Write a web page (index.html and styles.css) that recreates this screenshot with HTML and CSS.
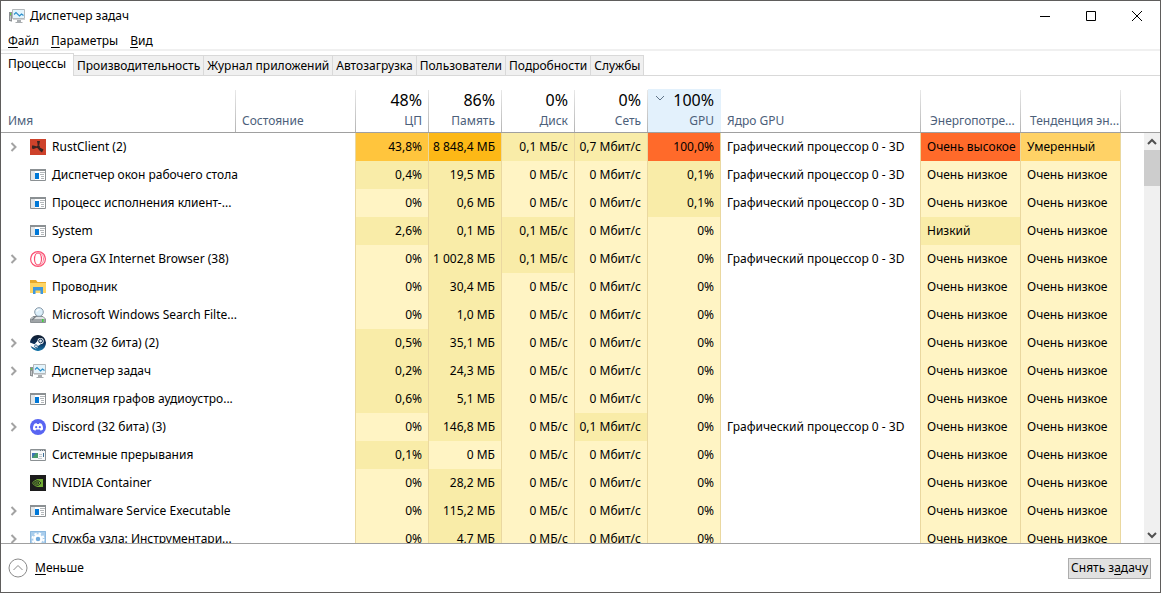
FILE: index.html
```
<!doctype html>
<html lang="ru">
  <head>
    <meta charset="utf-8">
    <title>Диспетчер задач</title>
    <link rel="stylesheet" href="styles.css">
  </head>
  <body>
    <!-- icons used in the rows -->
    <svg class="sprite" aria-hidden="true">
      <symbol id="i-arrow" viewBox="0 0 8 10"><path d="M1.5 1l4 4-4 4" fill="none" stroke="#a3a3a3" stroke-width="2"/></symbol>
      <symbol id="i-taskmgr" viewBox="0 0 16 16">
        <path d="M3.500 1.500h12v9h-12z" fill="#e3f4fc" stroke="#b4b8bb"/>
        <path d="M4 11.500h12" stroke="#d0d3d5"/>
        <path d="M8 12h4v2h1.500v1h-7v-1H8z" fill="#a9adb0"/>
        <path d="M0 4h3v9H0z" fill="#8d9194"/>
        <path d="M1 5h1v2H1z" fill="#5fd43c"/>
        <path d="M1 8h1v4H1zM2 13h1v1H1z" fill="#c3c6c8"/>
        <path d="M5 6.500l2-2 3.500 3.500 2-2 2 1.500" fill="none" stroke="#2b8fcb" stroke-width="1.200"/>
      </symbol>
      <symbol id="i-app" viewBox="0 0 16 16">
        <path d="M.5 2.500h15v11H.5z" fill="#fff" stroke="#8b9093"/>
        <path d="M0 2h16v2H0z" fill="#8b9093"/>
        <path d="M1 4h4v9H1z" fill="#e2e6e9"/>
        <path d="M5 6h4v6H5z" fill="#0078d7"/>
        <path d="M10 5.500h5M10 7.500h4M11 9.500h3M11 11.500h3" stroke="#b3b7ba"/>
      </symbol>
      <symbol id="i-interrupt" viewBox="0 0 16 16">
        <path d="M.5 2.500h15v11H.5z" fill="#f8f9fa" stroke="#8b9093"/>
        <path d="M1 3.500h14" stroke="#c6cbd0"/>
        <path d="M10 3.500h1M12 3.500h1M14 3.500h1" stroke="#6d7880"/>
        <path d="M2 6h6v5H2z" fill="#4a9b6b"/>
        <path d="M2 6h4L2 11z" fill="#3f72b5"/>
        <path d="M9 7.500h3M9 9.500h3M8 11.500h4" stroke="#c3c9ce"/>
        <path d="M13.500 6v4" stroke="#3c6e96"/>
      </symbol>
      <symbol id="i-rust" viewBox="0 0 16 16">
        <path d="M0 0h16v16H0z" fill="#ce422b"/>
        <path d="M7 2h3L9.200 6.500H7.800z" fill="#3a2421"/>
        <path d="M2 6.500h1.500L7 7.500v1.200L3.500 10 2 9.500z" fill="#3a2421"/>
        <path d="M9 8l4.500 2.500-1.500 3L10 12 7.800 9.500z" fill="#3a2421"/>
        <circle cx="8.300" cy="7.800" r="1.600" fill="#3a2421"/>
      </symbol>
      <symbol id="i-opera" viewBox="0 0 16 16">
        <circle cx="8" cy="8" r="7.400" fill="#fff" stroke="#fa4e71" stroke-width="1.200"/>
        <ellipse cx="8" cy="8" rx="3.500" ry="6" fill="none" stroke="#fa4e71" stroke-width="1.200"/>
        <path d="M6.500 2.500c5-2 7 2 7 5.500s-2.500 7.500-7 5.500" fill="none" stroke="#fb8aa0"/>
      </symbol>
      <symbol id="i-folder" viewBox="0 0 16 16">
        <path d="M0 1h6l1.500 2H16v11H0z" fill="#e8a92c"/>
        <path d="M0 4h16v10H0z" fill="#ffd563"/>
        <path d="M3 8h10v7h-2.500v-3.500h-5V15H3z" fill="#3f97dc"/>
      </symbol>
      <symbol id="i-search" viewBox="0 0 16 16">
        <path d="M3 9.500h10l2.500 2.500v3.500H.5V12z" fill="#dfe2e4" stroke="#8b9194"/>
        <path d="M1 12h14v3H1z" fill="#9fa4a7"/>
        <path d="M12 12h1.500v3H12z" fill="#3fd63b"/>
        <path d="M6 9l-4 4" stroke="#777d82" stroke-width="1.500"/>
        <circle cx="9" cy="5" r="4.300" fill="#dceffa" stroke="#8799a8"/>
        <path d="M6.500 4.500Q7.500 2.500 9.500 2.500" fill="none" stroke="#fff" stroke-width="1.200"/>
      </symbol>
      <symbol id="i-steam" viewBox="0 0 16 16">
        <linearGradient id="steam-bg" x1="0" y1="0" x2="0" y2="1"><stop offset="0" stop-color="#111d2e"/><stop offset=".5" stop-color="#0d2f58"/><stop offset="1" stop-color="#1779ad"/></linearGradient>
        <path d="M8 0a8 8 0 1 1-7.700 10.200A8 8 0 0 1 8 0z" fill="url(#steam-bg)"/>
        <path d="M0 7.500l4.500 1.800L7.500 6h2l1.500 3-3 2-.5 1.700-2 .8L0 10.800z" fill="#fff"/>
        <circle cx="10.600" cy="6" r="3.100" fill="#fff"/>
        <circle cx="10.600" cy="6" r="1.900" fill="#dfe7ee" stroke="#123458"/>
        <circle cx="6" cy="11.200" r="1.400" fill="#fff" stroke="#145184" stroke-width=".8"/>
      </symbol>
      <symbol id="i-discord" viewBox="0 0 16 16">
        <circle cx="8" cy="8" r="8" fill="#5865f2"/>
        <path d="M4.500 4.700L6.500 4l.5.900h2l.5-.900 2 .7c1.200 1.800 1.700 3.700 1.500 5.800l-2.300 1.200-.7-1.200H6l-.7 1.200L3 10.500c-.2-2.100.3-4 1.500-5.800z" fill="#fff"/>
        <circle cx="6.200" cy="8.200" r="1.100" fill="#5865f2"/>
        <circle cx="9.800" cy="8.200" r="1.100" fill="#5865f2"/>
      </symbol>
      <symbol id="i-nvidia" viewBox="0 0 16 16">
        <path d="M0 0h16v16H0z" fill="#1c1c1c"/>
        <path d="M6.500 4H13v8H6.500z" fill="#72ad35"/>
        <path d="M6.500 5.500q3 0 4.500 2.500-1.500 2.500-4.500 3" fill="none" stroke="#1c1c1c" stroke-width=".8"/>
        <path d="M6.500 5Q4 5.500 2.500 8q1.500 2.500 4 3.300M6.500 6.700Q5 7 4.500 8q.5 1.300 2 1.700" fill="none" stroke="#72ad35" stroke-width=".9"/>
        <path d="M6.500 7q2-.2 2.500 1-.7 1.500-2.500 1" fill="none" stroke="#1c1c1c" stroke-width=".8"/>
      </symbol>
      <symbol id="i-service" viewBox="0 0 16 16">
        <path d="M0 0h16v16H0z" fill="#a9cdec"/>
        <path d="M.5 .5h15v15H.5z" fill="none" stroke="#8db9df"/>
        <circle cx="8" cy="8" r="5.500" fill="none" stroke="#fff" stroke-width="2" stroke-dasharray="2.320 2"/>
        <circle cx="8" cy="8" r="3.500" fill="#6fa9dc" stroke="#fff" stroke-width="2.500"/>
      </symbol>
    </svg>

    <div class="window">
      <header class="title-bar">
        <svg class="icon"><use href="#i-taskmgr"/></svg>
        <h1>Диспетчер задач</h1>
        <div class="window-buttons">
          <button aria-label="Свернуть"><svg viewBox="0 0 12 12"><path d="M1 6.500h10"/></svg></button>
          <button aria-label="Развернуть"><svg viewBox="0 0 12 12"><path d="M1.500 1.500h9v9h-9z"/></svg></button>
          <button aria-label="Закрыть"><svg viewBox="0 0 12 12"><path d="M1 1l10 10M11 1L1 11"/></svg></button>
        </div>
      </header>

      <nav class="menu">
        <button><u>Ф</u>айл</button>
        <button><u>П</u>араметры</button>
        <button><u>В</u>ид</button>
      </nav>

      <div class="tabs" role="tablist">
        <button class="tab active" role="tab" aria-selected="true">Процессы</button>
        <button class="tab" role="tab">Производительность</button>
        <button class="tab" role="tab">Журнал приложений</button>
        <button class="tab" role="tab">Автозагрузка</button>
        <button class="tab" role="tab">Пользователи</button>
        <button class="tab" role="tab">Подробности</button>
        <button class="tab" role="tab">Службы</button>
      </div>

      <main class="content">
        <div class="table-wrap">
          <table>
            <colgroup>
              <col class="col-name"><col class="col-state">
              <col class="col-num"><col class="col-num"><col class="col-num"><col class="col-num"><col class="col-num">
              <col class="col-core"><col class="col-power"><col class="col-power"><col>
            </colgroup>
            <thead>
              <tr>
                <th>Имя</th>
                <th class="text">Состояние</th>
                <th class="num"><strong>48%</strong>ЦП</th>
                <th class="num"><strong>86%</strong>Память</th>
                <th class="num"><strong>0%</strong>Диск</th>
                <th class="num"><strong>0%</strong>Сеть</th>
                <th class="num sorted"><div><strong><svg viewBox="0 0 10 6"><path d="M1 1l4 4 4-4"/></svg>100%</strong>GPU</div></th>
                <th class="text">Ядро GPU</th>
                <th class="power">Энергопотре...</th>
                <th class="power">Тенденция эн...</th>
                <th class="rest"></th>
              </tr>
            </thead>
            <tbody>
              <tr>
                <td><div class="name"><svg class="arrow"><use href="#i-arrow"/></svg><svg class="icon"><use href="#i-rust"/></svg>RustClient (2)</div></td><td></td>
                <td class="heat-3">43,8%</td><td class="heat-4">8 848,4 МБ</td><td class="heat-1">0,1 МБ/с</td><td class="heat-1">0,7 Мбит/с</td><td class="heat-5">100,0%</td>
                <td>Графический процессор 0 - 3D</td><td class="heat-5">Очень высокое</td><td class="heat-2">Умеренный</td><td></td>
              </tr>
              <tr>
                <td><div class="name"><span class="arrow"></span><svg class="icon"><use href="#i-app"/></svg>Диспетчер окон рабочего стола</div></td><td></td>
                <td class="heat-1">0,4%</td><td class="heat-1">19,5 МБ</td><td class="heat-0">0 МБ/с</td><td class="heat-0">0 Мбит/с</td><td class="heat-1">0,1%</td>
                <td>Графический процессор 0 - 3D</td><td class="heat-0">Очень низкое</td><td class="heat-0">Очень низкое</td><td></td>
              </tr>
              <tr>
                <td><div class="name"><span class="arrow"></span><svg class="icon"><use href="#i-app"/></svg>Процесс исполнения клиент-...</div></td><td></td>
                <td class="heat-0">0%</td><td class="heat-1">0,6 МБ</td><td class="heat-0">0 МБ/с</td><td class="heat-0">0 Мбит/с</td><td class="heat-1">0,1%</td>
                <td>Графический процессор 0 - 3D</td><td class="heat-0">Очень низкое</td><td class="heat-0">Очень низкое</td><td></td>
              </tr>
              <tr>
                <td><div class="name"><span class="arrow"></span><svg class="icon"><use href="#i-app"/></svg>System</div></td><td></td>
                <td class="heat-1">2,6%</td><td class="heat-1">0,1 МБ</td><td class="heat-1">0,1 МБ/с</td><td class="heat-0">0 Мбит/с</td><td class="heat-0">0%</td>
                <td></td><td class="heat-1">Низкий</td><td class="heat-0">Очень низкое</td><td></td>
              </tr>
              <tr>
                <td><div class="name"><svg class="arrow"><use href="#i-arrow"/></svg><svg class="icon"><use href="#i-opera"/></svg>Opera GX Internet Browser (38)</div></td><td></td>
                <td class="heat-0">0%</td><td class="heat-1">1 002,8 МБ</td><td class="heat-1">0,1 МБ/с</td><td class="heat-0">0 Мбит/с</td><td class="heat-0">0%</td>
                <td>Графический процессор 0 - 3D</td><td class="heat-0">Очень низкое</td><td class="heat-0">Очень низкое</td><td></td>
              </tr>
              <tr>
                <td><div class="name"><span class="arrow"></span><svg class="icon"><use href="#i-folder"/></svg>Проводник</div></td><td></td>
                <td class="heat-0">0%</td><td class="heat-1">30,4 МБ</td><td class="heat-0">0 МБ/с</td><td class="heat-0">0 Мбит/с</td><td class="heat-0">0%</td>
                <td></td><td class="heat-0">Очень низкое</td><td class="heat-0">Очень низкое</td><td></td>
              </tr>
              <tr>
                <td><div class="name"><span class="arrow"></span><svg class="icon"><use href="#i-search"/></svg>Microsoft Windows Search Filte...</div></td><td></td>
                <td class="heat-0">0%</td><td class="heat-1">1,0 МБ</td><td class="heat-0">0 МБ/с</td><td class="heat-0">0 Мбит/с</td><td class="heat-0">0%</td>
                <td></td><td class="heat-0">Очень низкое</td><td class="heat-0">Очень низкое</td><td></td>
              </tr>
              <tr>
                <td><div class="name"><svg class="arrow"><use href="#i-arrow"/></svg><svg class="icon"><use href="#i-steam"/></svg>Steam (32 бита) (2)</div></td><td></td>
                <td class="heat-1">0,5%</td><td class="heat-1">35,1 МБ</td><td class="heat-0">0 МБ/с</td><td class="heat-0">0 Мбит/с</td><td class="heat-0">0%</td>
                <td></td><td class="heat-0">Очень низкое</td><td class="heat-0">Очень низкое</td><td></td>
              </tr>
              <tr>
                <td><div class="name"><svg class="arrow"><use href="#i-arrow"/></svg><svg class="icon"><use href="#i-taskmgr"/></svg>Диспетчер задач</div></td><td></td>
                <td class="heat-1">0,2%</td><td class="heat-1">24,3 МБ</td><td class="heat-0">0 МБ/с</td><td class="heat-0">0 Мбит/с</td><td class="heat-0">0%</td>
                <td></td><td class="heat-0">Очень низкое</td><td class="heat-0">Очень низкое</td><td></td>
              </tr>
              <tr>
                <td><div class="name"><span class="arrow"></span><svg class="icon"><use href="#i-app"/></svg>Изоляция графов аудиоустро...</div></td><td></td>
                <td class="heat-1">0,6%</td><td class="heat-1">5,1 МБ</td><td class="heat-0">0 МБ/с</td><td class="heat-0">0 Мбит/с</td><td class="heat-0">0%</td>
                <td></td><td class="heat-0">Очень низкое</td><td class="heat-0">Очень низкое</td><td></td>
              </tr>
              <tr>
                <td><div class="name"><svg class="arrow"><use href="#i-arrow"/></svg><svg class="icon"><use href="#i-discord"/></svg>Discord (32 бита) (3)</div></td><td></td>
                <td class="heat-0">0%</td><td class="heat-1">146,8 МБ</td><td class="heat-0">0 МБ/с</td><td class="heat-1">0,1 Мбит/с</td><td class="heat-0">0%</td>
                <td>Графический процессор 0 - 3D</td><td class="heat-0">Очень низкое</td><td class="heat-0">Очень низкое</td><td></td>
              </tr>
              <tr>
                <td><div class="name"><span class="arrow"></span><svg class="icon"><use href="#i-interrupt"/></svg>Системные прерывания</div></td><td></td>
                <td class="heat-1">0,1%</td><td class="heat-0">0 МБ</td><td class="heat-0">0 МБ/с</td><td class="heat-0">0 Мбит/с</td><td class="heat-0">0%</td>
                <td></td><td class="heat-0">Очень низкое</td><td class="heat-0">Очень низкое</td><td></td>
              </tr>
              <tr>
                <td><div class="name"><span class="arrow"></span><svg class="icon"><use href="#i-nvidia"/></svg>NVIDIA Container</div></td><td></td>
                <td class="heat-0">0%</td><td class="heat-1">28,2 МБ</td><td class="heat-0">0 МБ/с</td><td class="heat-0">0 Мбит/с</td><td class="heat-0">0%</td>
                <td></td><td class="heat-0">Очень низкое</td><td class="heat-0">Очень низкое</td><td></td>
              </tr>
              <tr>
                <td><div class="name"><svg class="arrow"><use href="#i-arrow"/></svg><svg class="icon"><use href="#i-app"/></svg>Antimalware Service Executable</div></td><td></td>
                <td class="heat-0">0%</td><td class="heat-1">115,2 МБ</td><td class="heat-0">0 МБ/с</td><td class="heat-0">0 Мбит/с</td><td class="heat-0">0%</td>
                <td></td><td class="heat-0">Очень низкое</td><td class="heat-0">Очень низкое</td><td></td>
              </tr>
              <tr>
                <td><div class="name"><svg class="arrow"><use href="#i-arrow"/></svg><svg class="icon"><use href="#i-service"/></svg>Служба узла: Инструментари...</div></td><td></td>
                <td class="heat-0">0%</td><td class="heat-1">4,7 МБ</td><td class="heat-0">0 МБ/с</td><td class="heat-0">0 Мбит/с</td><td class="heat-0">0%</td>
                <td></td><td class="heat-0">Очень низкое</td><td class="heat-0">Очень низкое</td><td></td>
              </tr>
            </tbody>
          </table>
        </div>
        <div class="scrollbar">
          <button aria-label="Вверх"><svg viewBox="0 0 10 8"><path d="M1 6l4-4 4 4"/></svg></button>
          <div class="thumb"></div>
          <button aria-label="Вниз"><svg viewBox="0 0 10 8"><path d="M1 2l4 4 4-4"/></svg></button>
        </div>
      </main>

      <footer class="bottom">
        <button class="less">
          <svg viewBox="0 0 20 20"><circle cx="10" cy="10" r="9"/><path d="M5.500 12L10 7.500l4.500 4.500"/></svg>
          <span><u>М</u>еньше</span>
        </button>
        <button class="end-task">Снять з<u>а</u>дачу</button>
      </footer>
    </div>
  </body>
</html>
```

FILE: styles.css
```
* {
  box-sizing: border-box;
}

body {
  margin: 0;
  font: 12px/16px "Noto Sans", "Open Sans", sans-serif;
  color: #000;
}

button {
  font: inherit;
  color: inherit;
  background: none;
  border: 0;
  padding: 0;
  white-space: nowrap;
}

u {
  text-underline-offset: 2px;
}

.sprite {
  position: absolute;
  width: 0;
  height: 0;
}

.icon {
  width: 16px;
  height: 16px;
  flex: none;
}

.window {
  height: 100vh;
  display: flex;
  flex-direction: column;
  background: #fff;
  border: 1px solid #5f5d5c;
  overflow: hidden;
}

/* title bar */
.title-bar {
  display: flex;
  align-items: center;
  height: 30px;
  padding-left: 8px;
  gap: 5px;
  flex: none;
}

.title-bar h1 {
  margin: 0;
  font-size: 12px;
  font-weight: normal;
  flex: 1;
}

.window-buttons {
  display: flex;
}

.window-buttons button {
  width: 46px;
  height: 30px;
  display: flex;
  align-items: center;
  justify-content: center;
}

.window-buttons svg {
  width: 12px;
  height: 12px;
  fill: none;
  stroke: #000;
}

/* menu */
.menu {
  display: flex;
  gap: 12px;
  padding: 2px 7px 0;
  border-bottom: 2px solid #f0f0f0;
  height: 20px;
  flex: none;
}

/* tabs */
.tabs {
  display: flex;
  align-items: flex-end;
  height: 25px;
  flex: none;
  box-shadow: inset 0 -1px #d9d9d9;
}

.tab {
  height: 21px;
  padding: 0 3px;
  background: #f0f0f0;
  border: 1px solid #d9d9d9;
  border-left: 0;
}

.tab.active {
  height: 23px;
  padding: 0 7px 2px;
  background: #fff;
  border-bottom: 0;
}

/* process table */
.content {
  flex: 1;
  min-height: 0;
  display: flex;
  border-bottom: 1px solid #a0a0a0;
}

.table-wrap {
  flex: 1;
  min-width: 0;
  overflow: hidden;
}

table {
  width: 100%;
  table-layout: fixed;
  border-collapse: separate;
  border-spacing: 0;
}

.col-name {
  width: 235px;
}

.col-state {
  width: 120px;
}

.col-num {
  width: 73px;
}

.col-core {
  width: 200px;
}

.col-power {
  width: 100px;
}

th {
  height: 57px;
  padding: 0 7px 3px;
  font-weight: normal;
  text-align: left;
  vertical-align: bottom;
  white-space: nowrap;
  color: #4c607a;
  border-bottom: 1px solid #a0a0a0;
  background: linear-gradient(#e8e8e8, #b4b4b4) right bottom / 1px 42px no-repeat;
}

th.num {
  text-align: right;
}

th.text {
  padding-left: 6px;
}

th:nth-child(8) {
  background-position: right bottom;
}

th.power {
  padding: 0 1px 3px 9px;
}

th.rest {
  background: none;
}

th strong {
  display: block;
  margin-bottom: 3px;
  font-size: 16px;
  line-height: 20px;
  font-weight: normal;
  color: #000;
}

th.sorted {
  padding: 0;
  background: none;
}

.sorted div {
  height: 43px;
  padding: 1px 7px 3px;
  background: #e3f1fc;
}

.sorted strong {
  display: flex;
  justify-content: space-between;
}

.sorted svg {
  width: 10px;
  height: 6px;
  margin-top: 5px;
  fill: none;
  stroke: #5f7388;
}

td {
  height: 28px;
  padding: 0 6px;
  white-space: nowrap;
}

td:first-child {
  padding: 0;
}

td:nth-child(n+2):nth-child(-n+10) {
  border-right: 1px solid #ead8a0;
}

td:nth-child(n+3):nth-child(-n+7) {
  padding-left: 0;
  text-align: right;
}

.name {
  display: flex;
  align-items: center;
  padding-left: 9px;
  gap: 6px;
}

.arrow {
  width: 8px;
  height: 10px;
  margin-right: 6px;
  flex: none;
}

.heat-0 {
  background: #fff4c4;
}

.heat-1 {
  background: #f9eca8;
}

.heat-2 {
  background: #ffd266;
}

.heat-3 {
  background: #ffc53d;
}

.heat-4 {
  background: #fdb816;
}

.heat-5 {
  background: #ff6a2a;
}

/* scrollbar starts under the table header */
.scrollbar {
  width: 16px;
  margin-top: 56px;
  border-top: 1px solid #a0a0a0;
  background: #f0f0f0;
  display: flex;
  flex-direction: column;
}

.scrollbar button {
  height: 17px;
  display: flex;
  align-items: center;
  justify-content: center;
}

.scrollbar svg {
  width: 10px;
  height: 8px;
  fill: none;
  stroke: #505050;
  stroke-width: 2;
}

.thumb {
  height: 36px;
  margin-bottom: auto;
  background: #cdcdcd;
}

/* footer */
.bottom {
  display: flex;
  align-items: center;
  justify-content: space-between;
  height: 48px;
  padding: 0 9px 0 7px;
  flex: none;
}

.less {
  display: flex;
  align-items: center;
  gap: 7px;
}

.less svg {
  width: 20px;
  height: 20px;
  fill: none;
  stroke: #8a8a8a;
}

.end-task {
  height: 21px;
  padding: 0 2px;
  background: #e1e1e1;
  border: 1px solid #adadad;
}
```
